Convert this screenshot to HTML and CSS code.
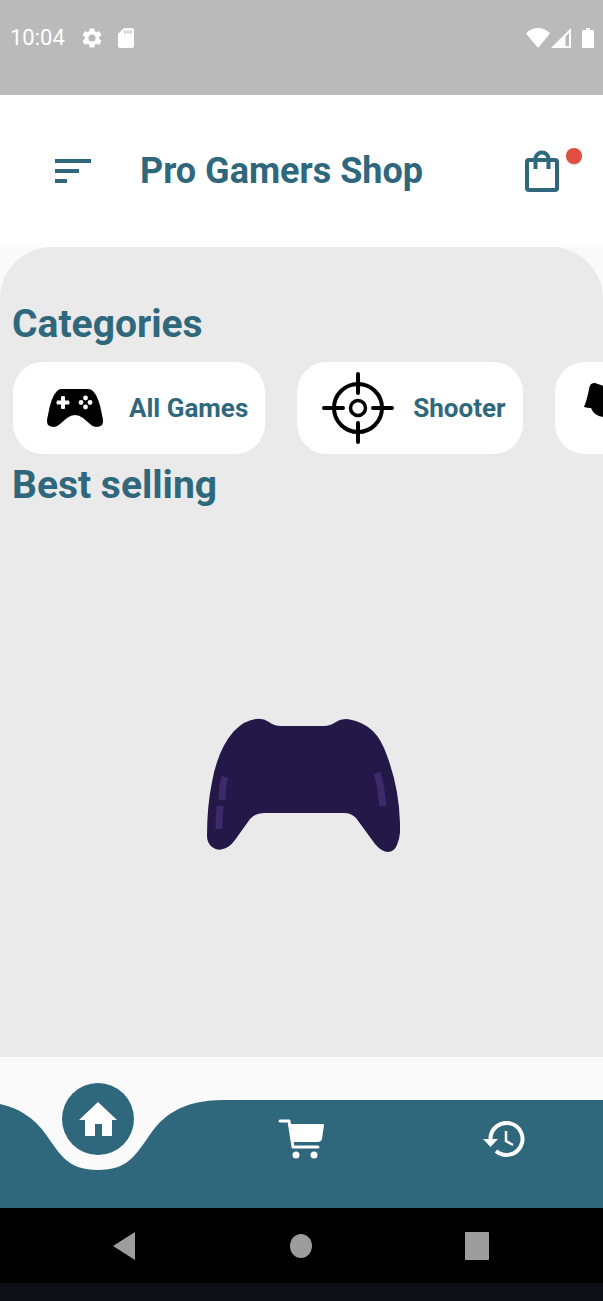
FILE: index.html
```html
<!DOCTYPE html>
<html lang="en">
<head>
<meta charset="utf-8">
<meta name="viewport" content="width=device-width, initial-scale=1">
<title>Pro Gamers Shop</title>
<link rel="stylesheet" href="styles.css">
</head>
<body>
<div class="status-bar">
  <div class="status-left">
    <span class="clock">10:04</span>
    <svg class="status-gear" viewBox="2 2 20 20" aria-hidden="true"><path fill="currentColor" d="M19.14 12.94c.04-.3.06-.61.06-.94s-.02-.64-.07-.94l2.03-1.58a.49.49 0 0 0 .12-.61l-1.92-3.32a.49.49 0 0 0-.59-.22l-2.39.96a7 7 0 0 0-1.62-.94l-.36-2.54A.48.48 0 0 0 13.92 2.400h-3.84a.48.48 0 0 0-.47.41l-.36 2.54c-.59.24-1.13.57-1.62.94l-2.39-.96a.48.48 0 0 0-.59.22L2.740 8.870a.47.47 0 0 0 .12.61l2.03 1.58c-.05.3-.09.63-.09.94s.02.64.07.94l-2.03 1.58a.49.49 0 0 0-.12.61l1.92 3.320c.12.22.37.29.59.22l2.39-.96c.5.38 1.030.7 1.620.94l.36 2.540c.05.24.24.41.48.41h3.840c.24 0 .44-.17.47-.41l.36-2.540c.59-.24 1.130-.56 1.620-.94l2.390.96c.22.08.47 0 .59-.22l1.920-3.320a.47.47 0 0 0-.12-.61zM12 15.600a3.600 3.600 0 1 1 0-7.200 3.600 3.600 0 0 1 0 7.200z"/></svg>
    <svg class="status-card" viewBox="0 0 16 20" aria-hidden="true"><path fill="currentColor" d="M6 0h8q2 0 2 2v16q0 2-2 2H2q-2 0-2-2V6z"/><path stroke="#bababa" stroke-width="1.500" d="M7 2.500v3M10 2.500v3M13 2.500v3"/></svg>
  </div>
  <div class="status-right">
    <svg class="status-wifi" viewBox="0 0 24 20" aria-hidden="true"><path fill="currentColor" d="M12 20 0 5.500Q5 0 12 0t12 5.500z"/></svg>
    <svg class="status-signal" viewBox="0 0 20 20" aria-hidden="true"><path fill="currentColor" d="M0 20 20 0v20z"/><path fill="#bababa" d="M14.500 8.500 18 5v13h-3.500z"/></svg>
    <svg class="status-battery" viewBox="0 0 12 20" aria-hidden="true"><path fill="currentColor" d="M4 0h4v2h3q1 0 1 1v16q0 1-1 1H1q-1 0-1-1V3q0-1 1-1h3z"/></svg>
  </div>
</div>

<header class="app-bar">
  <button class="icon-button" type="button" aria-label="Menu">
    <svg class="menu-icon" viewBox="0 0 36 24" aria-hidden="true"><path fill="currentColor" d="M0 0h36v4H0zM0 10h24v4H0zM0 20h12v4H0z"/></svg>
  </button>
  <h1 class="app-title">Pro Gamers Shop</h1>
  <button class="icon-button bag-button" type="button" aria-label="Shopping bag">
    <svg class="bag-icon" viewBox="0 0 34 42" fill="none" stroke="currentColor" stroke-width="4" aria-hidden="true"><rect x="2" y="10" width="30" height="30" rx="2"/><path d="M10.500 19V9a6.500 6.500 0 0 1 13 0v10"/></svg>
    <span class="bag-badge"></span>
  </button>
</header>

<div class="sheet-wrap">
  <main class="sheet">
    <h2 class="section-title">Categories</h2>
    <div class="categories">
      <button class="category" type="button">
        <svg class="category-icon" viewBox="0 0 72 72" aria-hidden="true"><path d="M23 17h27q3 0 5 2 6 6 9 24 2 7 0 10-2 2-6 2-3 0-6-3l-7-6q-4-3-8-3t-8 3l-7 6q-3 3-6 3-4 0-6-2-2-3 0-10 3-18 9-24 2-2 4-2z"/><g fill="#fff"><path d="M23 24.500q2-1 4 0v4h4q1 2 0 4h-4v4q-2 1-4 0v-4h-4q-1-2 0-4h4z"/><circle cx="47.500" cy="26" r="2.400"/><circle cx="52" cy="30.500" r="2.400"/><circle cx="43" cy="30.500" r="2.400"/><circle cx="47.500" cy="35" r="2.400"/></g></svg>
        <span>All Games</span>
      </button>
      <button class="category" type="button">
        <svg class="category-icon" viewBox="0 0 72 72" fill="none" stroke="#000" stroke-width="4" stroke-linecap="round" aria-hidden="true"><circle cx="36" cy="36" r="24"/><circle cx="36" cy="36" r="7.500" stroke-width="3.500"/><path d="M36 2v19M36 51v19M2 36h19M51 36h19"/></svg>
        <span>Shooter</span>
      </button>
      <button class="category" type="button" aria-label="Next category">
        <svg class="category-icon" viewBox="0 0 72 72" aria-hidden="true"><path d="M4 35q3-7 5-18 1-7 6-6l9 3q22 6 36 22l-8 26q-14 0-20-11-4-4-9-6-9-1-12-9-4 0-7-1z"/></svg>
      </button>
    </div>
    <h2 class="section-title section-title-next">Best selling</h2>
    <div class="loading">
      <svg class="gamepad" viewBox="0 0 193 134" role="img" aria-label="Loading"><path fill="#231848" d="M74 8Q67 8 62 4 56 0 49 1 38 2 27 13 11 31 5 64 0 88 0 118 0 125 5 129 10 133 16 131 22 130 28 122L43 101Q48 95 57 95H137Q144 95 149 100L168 126Q175 134 181 134 187 134 190 127 194 118 193 105 192 66 177 30 171 16 161 9 150 2 140 1 133 1 129 4 123 8 117 8z"/><g fill="none" stroke="#3d2a6b" stroke-width="7"><path d="M18 59Q15 68 15 82M13 88Q12 98 12 111M170 55Q174 67 176 88"/></g></svg>
    </div>
  </main>
</div>

<nav class="tab-bar" aria-label="Main">
  <div class="tab-shape" aria-hidden="true">
    <svg class="notch" viewBox="0 0 224 108"><path fill="#2f687c" d="M0 4C18 8 34 17 47 36C61 56 69 70 98 70C127 70 135 56 149 36C162 17 180 0 224 0V108H0z"/></svg>
    <div class="tab-fill"></div>
  </div>
  <button class="tab tab-active" type="button" aria-label="Home" aria-current="page">
    <svg class="home-icon" viewBox="0 0 38 34" aria-hidden="true"><path fill="currentColor" d="M16 34V22h7v12h10V18h5L19 0 0 18h6v16z"/></svg>
  </button>
  <button class="tab" type="button" aria-label="Cart">
    <svg class="cart-icon" viewBox="0 0 46 40" aria-hidden="true"><path fill="none" stroke="currentColor" stroke-width="3" stroke-linecap="round" stroke-linejoin="round" d="M2 2h9l4 26h25"/><path fill="currentColor" d="M11 5h34q1 0 1 1l-2 14q-1 3-4 3H14z"/><circle cx="18" cy="36" r="3.500"/><circle cx="36" cy="36" r="3.500"/></svg>
  </button>
  <button class="tab" type="button" aria-label="History">
    <svg class="history-icon" viewBox="0 0 42 36" fill="none" stroke="currentColor" aria-hidden="true"><path stroke-width="4" d="M7.500 20V18A16 16 0 1 1 13 30"/><path fill="currentColor" stroke="none" d="M0 18h15l-7.500 8z"/><path stroke-width="2.500" d="M23 10v10l7 4"/></svg>
  </button>
</nav>

<div class="system-bar">
  <button class="system-button" type="button" aria-label="Back"><svg class="back-icon" viewBox="0 0 22 28" aria-hidden="true"><path fill="currentColor" d="M22 0v28L0 14z"/></svg></button>
  <button class="system-button" type="button" aria-label="Home screen"><svg class="circle-icon" viewBox="0 0 22 26" aria-hidden="true"><ellipse fill="currentColor" cx="11" cy="13" rx="11" ry="12"/></svg></button>
  <button class="system-button" type="button" aria-label="Recent apps"><svg class="square-icon" viewBox="0 0 24 28" aria-hidden="true"><rect fill="currentColor" width="24" height="28" rx="1"/></svg></button>
</div>
<div class="bottom-strip"></div>
</body>
</html>
```
FILE: styles.css
```css
:root {
  --teal: #2f687c;
}

* {
  box-sizing: border-box;
}

body {
  margin: 0;
  min-height: 100vh;
  display: flex;
  flex-direction: column;
  background: #fafafa;
  color: var(--teal);
  font-family: Roboto, "Open Sans", sans-serif;
}

button {
  border: 0;
  margin: 0;
  padding: 0;
  background: none;
  color: inherit;
  font: inherit;
  cursor: pointer;
}

svg {
  display: block;
  flex: none;
}

.status-bar {
  display: flex;
  justify-content: space-between;
  align-items: flex-start;
  height: 95px;
  padding: 24px 9px 0 10px;
  background: #bababa;
  color: #fff;
}

.status-left,
.status-right {
  display: flex;
  align-items: center;
  height: 27px;
}

.clock {
  margin-right: 17px;
  font-size: 22px;
  line-height: 27px;
}

.status-gear { width: 20px; height: 20px; margin-right: 16px; }
.status-card { width: 16px; height: 20px; }
.status-wifi { width: 24px; height: 20px; }
.status-signal { width: 20px; height: 20px; margin: 0 11px 0 1px; }
.status-battery { width: 12px; height: 20px; }

.app-bar {
  display: flex;
  align-items: center;
  height: 152px;
  padding: 0 44px 0 55px;
  background: #fff;
}

.menu-icon { width: 36px; height: 24px; }

.app-title {
  flex: 1;
  margin: 0 0 0 49px;
  font-size: 36px;
  line-height: 44px;
  font-weight: 700;
}

.bag-button {
  position: relative;
}

.bag-icon { width: 34px; height: 42px; }

.bag-badge {
  position: absolute;
  top: -2px;
  right: -23px;
  width: 16px;
  height: 16px;
  border-radius: 50%;
  background: #e04f3f;
  box-shadow: 0 1px 2px rgba(0, 0, 0, 0.2);
}

.sheet-wrap {
  flex: 1;
  display: flex;
}

.sheet {
  flex: 1;
  min-width: 0;
  display: flex;
  flex-direction: column;
  padding-top: 55px;
  border-radius: 52px 52px 0 0;
  background: #eaeaea;
}

.section-title {
  margin: 0 12px 16px;
  font-size: 39px;
  line-height: 44px;
  font-weight: 700;
}

.section-title-next {
  margin: 9px 12px 0;
}

.categories {
  display: flex;
  gap: 32px;
  padding: 0 13px;
  overflow-x: auto;
  scrollbar-width: none;
}

.category {
  flex: none;
  display: flex;
  align-items: center;
  gap: 19px;
  height: 92px;
  padding: 0 17px 0 25px;
  border-radius: 30px;
  background: #fff;
  font-size: 26px;
  line-height: 32px;
  font-weight: 700;
}

.category-icon { width: 72px; height: 72px; }

.loading {
  flex: 1;
  display: flex;
  align-items: center;
  justify-content: center;
  padding: 6px 0 0 4px;
}

.gamepad { width: 193px; height: 134px; }

.tab-bar {
  position: relative;
  display: flex;
  justify-content: space-between;
  padding: 26px 63px 53px 62px;
}

.tab-shape {
  position: absolute;
  inset: auto 0 0;
  display: flex;
}

.notch { width: 224px; height: 108px; }

.tab-fill {
  flex: 1;
  background: var(--teal);
}

.tab {
  position: relative;
  display: flex;
  align-items: center;
  justify-content: center;
  width: 72px;
  height: 72px;
  padding-top: 40px;
  color: #fff;
}

.tab-active {
  padding-top: 0;
  border-radius: 50%;
  background: var(--teal);
}

.home-icon { width: 38px; height: 34px; }
.cart-icon { width: 46px; height: 40px; fill: currentColor; }
.history-icon { width: 42px; height: 36px; }

.system-bar {
  display: flex;
  justify-content: space-between;
  align-items: center;
  height: 75px;
  padding: 0 102px 0 100px;
  background: #000;
  color: #9d9d9d;
}

.system-button {
  display: flex;
  align-items: center;
  justify-content: center;
  width: 48px;
  height: 48px;
}

.back-icon { width: 22px; height: 28px; }
.circle-icon { width: 22px; height: 26px; }
.square-icon { width: 24px; height: 28px; }

.bottom-strip {
  height: 18px;
  background: #0c0f13;
}
```
